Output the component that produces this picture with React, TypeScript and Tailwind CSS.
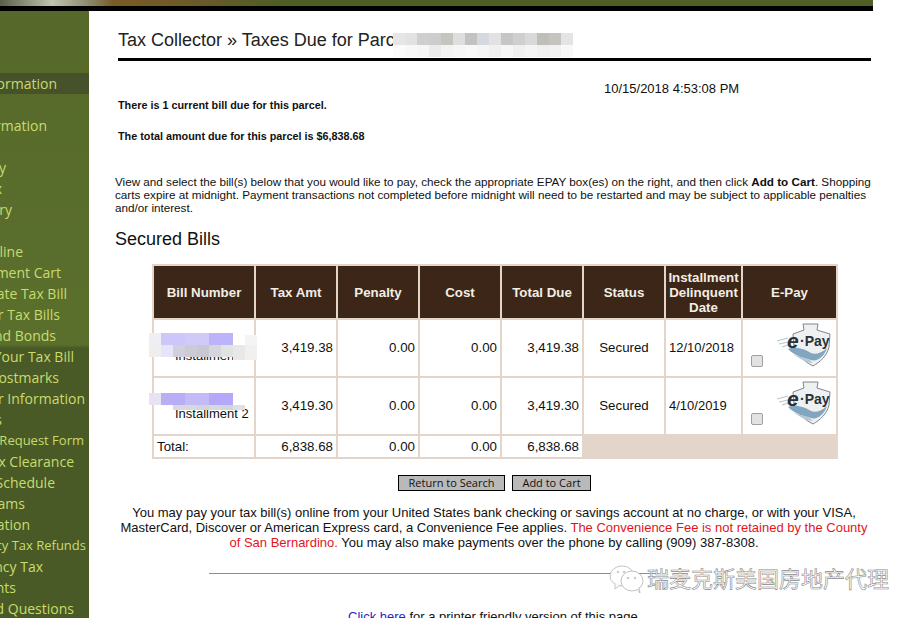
import React from "react"

// text is cut by the left window edge, so each row is right aligned at its own inset
const navItems = [
  { label: "Tax Information", inset: "pr-[32px]", top: "mt-[62px]", active: true },
  { label: "Parcel Information", inset: "pr-[42px]", top: "mt-[21px]" },
  { label: "Property", inset: "pr-[83px]", top: "mt-[21px]" },
  { label: "Tax", inset: "pr-[87px]" },
  { label: "Tax History", inset: "pr-[77px]" },
  { label: "Pay Online", inset: "pr-[66px]", top: "mt-[21px]" },
  { label: "Payment Cart", inset: "pr-[28px]" },
  { label: "Duplicate Tax Bill", inset: "pr-[22px]" },
  { label: "Your Tax Bills", inset: "pr-[29px]" },
  { label: "Tax Sale and Bonds", inset: "pr-[33px]" },
  { label: "Understanding Your Tax Bill", inset: "pr-[15px]" },
  { label: "Postmarks", inset: "pr-[30px]" },
  { label: "Other Information", inset: "pr-[4px]" },
  { label: "Forms", inset: "pr-[87px]" },
  { label: "Exemption Request Form", inset: "pr-[5px]", small: true },
  { label: "Tax Clearance", inset: "pr-[15px]" },
  { label: "Tax Schedule", inset: "pr-[34px]" },
  { label: "Programs", inset: "pr-[64px]" },
  { label: "Information", inset: "pr-[59px]" },
  { label: "Delinquency Tax Refunds", inset: "pr-[3px]", small: true },
  { label: "Delinquency Tax", inset: "pr-[46px]" },
  { label: "Payments", inset: "pr-[73px]" },
  { label: "Frequently Asked Questions", inset: "pr-[15px]" },
]

const columns = [
  { name: "Bill Number", width: "w-[100px]" },
  { name: "Tax Amt", width: "w-[80px]" },
  { name: "Penalty", width: "w-[80px]" },
  { name: "Cost", width: "w-[80px]" },
  { name: "Total Due", width: "w-[80px]" },
  { name: "Status", width: "w-[80px]" },
  { name: "Installment Delinquent Date", width: "w-[75px]" },
  { name: "E-Pay", width: "w-[93px]" },
]

const bills = [
  { label: "Installment 1", amt: "3,419.38", date: "12/10/2018", height: "h-[56px]" },
  { label: "Installment 2", amt: "3,419.30", date: "4/10/2019", height: "h-[56px]" },
]

// pixelated cover strips, one 12px cell per colour
function Mosaic({ className, cells }: { className: string; cells: string[] }) {
  return (
    <div className={`absolute flex ${className}`}>
      {cells.map((cell, i) => (
        <div key={i} className={`h-full w-[12px] ${cell}`} />
      ))}
    </div>
  )
}

function EPayLogo() {
  return (
    <div className="relative h-[44px] w-[57px] shrink-0">
      <svg viewBox="0 0 57 44" className="absolute inset-0 h-full w-full">
        <path
          d="M28 1 L43 1 L42 7 L55 11 L54 24 C52 33 45 39 38 43 C30 39 22 32 19 24 L18 11 L29 7 Z"
          fill="#eef0f1"
          stroke="#7d888e"
          strokeWidth="1"
        />
        <path d="M13 26 C20 23 30 26 36 30 C40 32 47 30 52 25 C49 34 42 39 36 37 C29 35 20 33 13 26 Z" fill="#83a6c0" />
        <path d="M18 31 C25 36 32 40 38 40 L34 36 C28 35 23 33 18 31 Z" fill="#b7c9d6" />
        <path d="M2 18 L13 15 M4 21 L13 19 M7 24 L13 22" stroke="#b4c6d4" strokeWidth="1.2" />
      </svg>
      <span className="absolute top-[7px] left-[12px] text-[21px] leading-[22px] font-bold text-[#26323a] italic">e</span>
      <span className="absolute top-[9px] left-[25px] text-[14px] leading-[18px] font-bold text-[#26323a]">·Pay</span>
    </div>
  )
}

function Row({ bill }: { bill: (typeof bills)[number] }) {
  return (
    <tr className={bill.height}>
      <td className="bg-white pt-[16px] pl-[21px] text-[13px] whitespace-nowrap">{bill.label}</td>
      <td className="bg-white pr-[3px] text-right">{bill.amt}</td>
      <td className="bg-white pr-[3px] text-right">0.00</td>
      <td className="bg-white pr-[3px] text-right">0.00</td>
      <td className="bg-white pr-[3px] text-right">{bill.amt}</td>
      <td className="bg-white text-center">Secured</td>
      <td className="bg-white pl-[3px] text-[13px]">{bill.date}</td>
      <td className="bg-white">
        <div className="flex items-end gap-[12px] pb-[6px] pl-[8px]">
          <span className="h-[12px] w-[12px] shrink-0 rounded-[2px] border border-[#a0a0a0] bg-[#e2e2e2]" />
          <EPayLogo />
        </div>
      </td>
    </tr>
  )
}

export default function App() {
  return (
    <div className="relative h-[618px] w-[918px] overflow-hidden bg-white font-['Liberation_Sans',sans-serif] text-[#111]">
      <div className="w-[873px]">
        <div className="h-[6px] bg-[linear-gradient(90deg,#5a5f48_0%,#c0c4b0_6%,#8c8c70_10%,#7a5b25_13%,#6a5a28_23%,#4d5e24_33%,#4f5f26_100%)]" />
        <div className="h-[5px] bg-black" />
      </div>

      <div className="flex">
        <aside className="h-[607px] w-[89px] shrink-0 overflow-hidden bg-[linear-gradient(180deg,#56692a_0%,#5b6f2d_55%,#4a5a26_55.5%,#4a5a26_100%)] font-['Open_Sans',sans-serif] text-[#c7dc6e]">
          {navItems.map((item) => (
            <div
              key={item.label}
              className={`flex h-[21px] items-center justify-end whitespace-nowrap ${item.inset} ${item.top ?? ""} ${item.active ? "bg-[#46522a]" : ""} ${item.small ? "text-[13px]" : "text-[14px]"}`}
            >
              {item.label}
            </div>
          ))}
        </aside>

        <main className="w-[784px] shrink-0 pl-[26px]">
          <div className="ml-[3px] w-[753px] border-b-[3px] border-black pt-[19px] pb-[7px]">
            <h1 className="text-[18px] leading-[21px] font-normal text-[#222]">
              Tax Collector » Taxes Due for Parcel 0000000000
            </h1>
          </div>

          <p className="mt-[20px] ml-[489px] text-[13px] leading-[16px]">10/15/2018 4:53:08 PM</p>
          <p className="mt-[2px] ml-[3px] text-[10.8px] leading-[13px] font-bold">
            There is 1 current bill due for this parcel.
          </p>
          <p className="mt-[18px] ml-[3px] text-[10.8px] leading-[13px] font-bold">
            The total amount due for this parcel is $6,838.68
          </p>

          <p className="mt-[32px] w-[762px] text-[11.7px] leading-[13px]">
            View and select the bill(s) below that you would like to pay, check the appropriate EPAY box(es) on the
            right, and then click <b>Add to Cart</b>. Shopping carts expire at midnight. Payment transactions not
            completed before midnight will need to be restarted and may be subject to applicable penalties and/or
            interest.
          </p>

          <h2 className="mt-[15px] text-[18px] leading-[21px] font-normal">Secured Bills</h2>

          <table className="mt-[14px] ml-[37px] w-[686px] table-fixed border-separate border-spacing-[2px] bg-[#e3d5c9] text-[13.3px]">
            <thead>
              <tr className="h-[52px]">
                {columns.map((col) => (
                  <th
                    key={col.name}
                    className={`${col.width} bg-[#3b2618] px-[2px] text-center text-[13.3px] leading-[15px] font-bold text-[#f3ede4]`}
                  >
                    {col.name}
                  </th>
                ))}
              </tr>
            </thead>
            <tbody>
              {bills.map((bill) => (
                <Row key={bill.label} bill={bill} />
              ))}
              <tr className="h-[21px]">
                <td className="bg-white pl-[3px]">Total:</td>
                <td className="bg-white pr-[3px] text-right">6,838.68</td>
                <td className="bg-white pr-[3px] text-right">0.00</td>
                <td className="bg-white pr-[3px] text-right">0.00</td>
                <td className="bg-white pr-[3px] text-right">6,838.68</td>
                <td colSpan={3} />
              </tr>
            </tbody>
          </table>

          <div className="mt-[16px] ml-[283px] flex gap-[7px]">
            <button className="h-[16px] w-[107px] border border-black bg-[#b9b9b9] font-['Open_Sans',sans-serif] text-[11px] leading-[14px] text-[#111]">
              Return to Search
            </button>
            <button className="h-[16px] w-[79px] border border-black bg-[#b9b9b9] font-['Open_Sans',sans-serif] text-[11px] leading-[14px] text-[#111]">
              Add to Cart
            </button>
          </div>

          <p className="mt-[14px] ml-[1px] w-[756px] text-center text-[13px] leading-[15px]">
            You may pay your tax bill(s) online from your United States bank checking or savings account at no charge,
            or with your VISA, MasterCard, Discover or American Express card, a Convenience Fee applies.{" "}
            <span className="text-[#e4141b]">The Convenience Fee is not retained by the County of San Bernardino.</span>{" "}
            You may also make payments over the phone by calling (909) 387-8308.
          </p>

          <hr className="mt-[23px] ml-[94px] w-[450px] border-t border-[#8c8c8c]" />

          <p className="mt-[35px] ml-[233px] text-[13px] leading-[16px] whitespace-nowrap">
            <span className="text-[#2a1fbf] underline">Click here</span> for a printer friendly version of this page.
          </p>
        </main>
      </div>

      {/* mosaic over the parcel number and bill numbers */}
      <Mosaic
        className="top-[33px] left-[393px] h-[12px]"
        cells={[
          "bg-[#e6e6e6]",
          "bg-[#e2e2e2]",
          "bg-[#cfcfcf]",
          "bg-[#cdcdcd]",
          "bg-[#c4c4c0]",
          "bg-[#dedede]",
          "bg-[#c2c2c2]",
          "bg-[#d6d8e0]",
          "bg-[#e2e2e2]",
          "bg-[#c8c6c4]",
          "bg-[#cfcfcf]",
          "bg-[#d9d9d9]",
          "bg-[#c0beb8]",
          "bg-[#c6c4c0]",
          "bg-[#e4e4e4]",
        ]}
      />
      <Mosaic
        className="top-[45px] left-[393px] h-[12px]"
        cells={[
          "bg-[#fbfbfb]",
          "bg-[#f8f8f8]",
          "bg-[#f6f6f6]",
          "bg-[#ebebeb]",
          "bg-[#f3f3f3]",
          "bg-[#f6f6f6]",
          "bg-[#f8f8f8]",
          "bg-[#f5f5f5]",
          "bg-[#f0f0f0]",
          "bg-[#f6f6f6]",
          "bg-[#f0f0f0]",
          "bg-[#f4f4f4]",
          "bg-[#f0f0f0]",
          "bg-[#f2f2f2]",
          "bg-[#f8f8f8]",
        ]}
      />
      <Mosaic
        className="top-[333px] left-[149px] h-[12px]"
        cells={["bg-[#f0eef4]", "bg-[#cdc6fb]", "bg-[#cdc6fb]", "bg-[#d0caf9]", "bg-[#d0caf9]", "bg-[#bdb3f9]", "bg-[#bdb3f9]"]}
      />
      <Mosaic
        className="top-[345px] left-[149px] h-[12px]"
        cells={["bg-[#eeeeee]", "bg-[#e6e3fa]", "bg-[#cfcfdd]", "bg-[#cbcbd6]", "bg-[#c8c8d3]", "bg-[#d5d5dc]", "bg-[#dfe3e2]"]}
      />
      <Mosaic className="top-[345px] left-[233px] h-[15px]" cells={["bg-[#e8e8e8]", "bg-[#f0f0f0]"]} />
      <Mosaic className="top-[335px] left-[245px] h-[10px]" cells={["bg-[#f6f3f3]"]} />
      <Mosaic
        className="top-[393px] left-[149px] h-[12px]"
        cells={["bg-[#e8e3f2]", "bg-[#b8aef5]", "bg-[#b8aef5]", "bg-[#c3baf7]", "bg-[#c3baf7]", "bg-[#b5a8f8]", "bg-[#b5a8f8]"]}
      />
      <Mosaic
        className="top-[405px] left-[173px] h-[5px]"
        cells={["bg-[#d6dadc]", "bg-[#d6dadc]", "bg-[#cfd5d8]", "bg-[#d6dadc]", "bg-[#cfd5d8]", "bg-[#dde0e2]"]}
      />

      {/* watermark */}
      <div className="absolute top-[564px] left-[609px] flex items-center gap-[2px]">
        <svg viewBox="0 0 36 28" className="h-[28px] w-[36px]" fill="#fff" stroke="#a9a9a9" strokeWidth="0.7">
          <ellipse cx="13" cy="11" rx="12" ry="10" />
          <path d="M6 19 L6 24 L11 20" />
          <ellipse cx="23" cy="16" rx="11" ry="10" />
          <path d="M28 24 L31 28 L30 22" />
          <circle cx="19" cy="13" r="0.8" />
          <circle cx="26" cy="13" r="0.8" />
          <circle cx="9" cy="7" r="0.8" />
          <circle cx="15" cy="7" r="0.8" />
        </svg>
        <span className="mb-[4px] font-['Noto_Sans_CJK_SC',sans-serif] text-[22px] leading-[26px] whitespace-nowrap text-white [-webkit-text-stroke:0.6px_#8a8a8a]">
          瑞麦克斯美国房地产代理
        </span>
      </div>
    </div>
  )
}
